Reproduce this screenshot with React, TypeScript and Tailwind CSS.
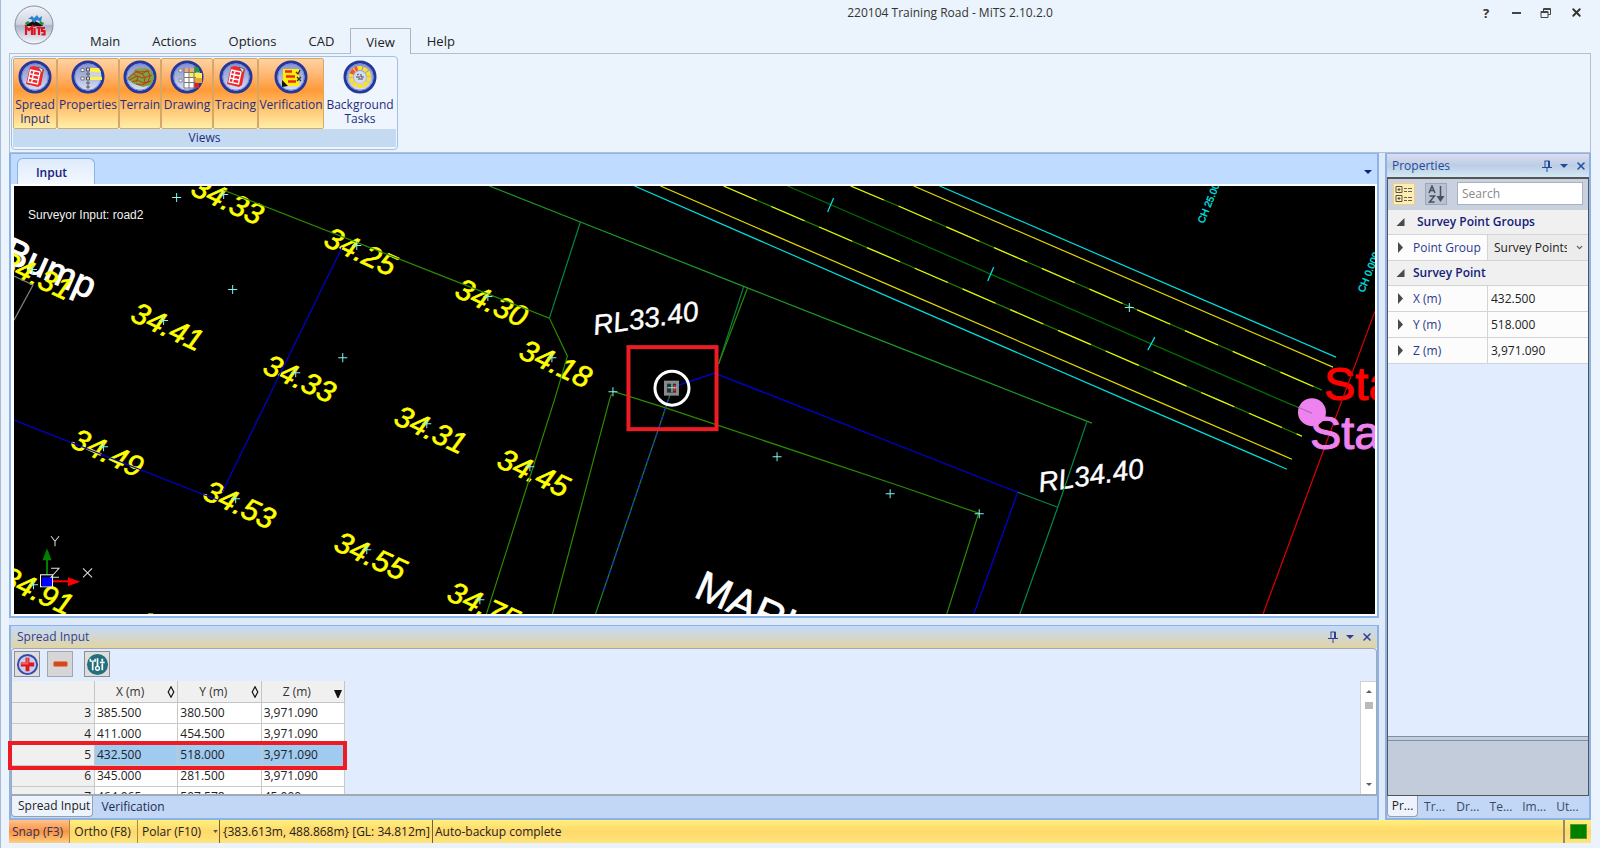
import React from 'react';
import { ChevronDown, X } from 'lucide-react';

type Point = [number, number];

const labels: { x: number; y: number; text: string }[] = [
  { x: 223, y: 194, text: '34.33' },
  { x: 356, y: 245, text: '34.25' },
  { x: 163, y: 320, text: '34.41' },
  { x: 295, y: 372, text: '34.33' },
  { x: 32, y: 269, text: '34.31' },
  { x: 487, y: 296, text: '34.30' },
  { x: 551, y: 357, text: '34.18' },
  { x: 426, y: 423, text: '34.31' },
  { x: 103, y: 446, text: '34.49' },
  { x: 235, y: 498, text: '34.53' },
  { x: 366, y: 549, text: '34.55' },
  { x: 529, y: 466, text: '34.45' },
  { x: 479, y: 599, text: '34.75' },
  { x: 33, y: 584, text: '34.91' },
];

const loneMarks: Point[] = [
  [176, 197], [232, 289], [342, 357], [612, 391], [776, 456], [889, 493], [978, 513], [1128, 307],
];

const lines: { points: string; color: string; dash?: string }[] = [
  { points: '223,190 450,279 549,318 567,356 554,400 486,614', color: '#2a8c00' },
  { points: '489,186 580,222 745,287 900,348 1091,423', color: '#1c9a28' },
  { points: '580,222 549,318', color: '#008a45' },
  { points: '743,287 718,364', color: '#008a45' },
  { points: '747,288 718,364', color: '#2a8c00' },
  { points: '342,247 267,400 222,492', color: '#0000d8' },
  { points: '14,420 218,500', color: '#0000d8' },
  { points: '14,276 33,285 14,320', color: '#808080' },
  { points: '672,387 714,373 783,400 900,446 1017,492 973,614', color: '#0000e0' },
  { points: '1086,422 1057,507 1019,614', color: '#008a45' },
  { points: '1017,492 1057,507', color: '#008a45' },
  { points: '612,391 666,408 900,486 978,513 946,614', color: '#2a8c00' },
  { points: '611,394 609,400 552,614', color: '#2a8c00' },
  { points: '671,390 665,408 595,614', color: '#1c8a20' },
  { points: '671,390 665,408 602,594', color: '#1030e0', dash: '5 4' },
  { points: '634,186 900,302 1126,400 1286,469', color: '#00dcdc' },
  { points: '660,186 900,290 1154,400 1291,459', color: '#e0d800' },
  { points: '723,186 900,262 1218,400 1301,436', color: '#1c8000' },
  { points: '723,186 900,262 1218,400 1301,436', color: '#f0f000', dash: '36 16' },
  { points: '787,186 900,235 1280,400 1311,413', color: '#007000' },
  { points: '850,186 900,207 1321,390', color: '#1c8000' },
  { points: '850,186 900,207 1321,390', color: '#f0f000', dash: '36 16' },
  { points: '913,186 1332,367', color: '#e0d800' },
  { points: '939,186 1335,357', color: '#00dcdc' },
  { points: '833,198 827,212', color: '#00e8e8' },
  { points: '993,267 987,281', color: '#00e8e8' },
  { points: '1154,337 1147,350', color: '#00e8e8' },
  { points: '1374,311 1262,614', color: '#e00000' },
];

function Mark({ x, y }: { x: number; y: number }) {
  return <path d={`M${x - 4} ${y + 0.5}h9M${x + 0.5} ${y - 4}v9`} stroke="#7ff5f5" strokeWidth="1" />;
}

function Drawing() {
  return (
    <svg
      className="block h-full w-full bg-black font-['Liberation_Sans',sans-serif]"
      viewBox="14 186 1360 428"
      preserveAspectRatio="xMinYMin slice"
      fill="none"
      role="img"
      aria-label="Survey plan"
    >
      <text fill="#fff" stroke="#fff" fontSize="37" transform="translate(1 260) rotate(24)">Bump</text>
      <text fill="#fff" stroke="#fff" strokeWidth=".6" fontSize="42" transform="translate(692 596) rotate(24)">MARK</text>
      <g fill="#fff" stroke="#fff" strokeWidth=".4" fontSize="28" fontStyle="italic">
        <text transform="translate(594 335) rotate(-8)">RL33.40</text>
        <text transform="translate(1039 492) rotate(-8)">RL34.40</text>
      </g>
      <g fill="#ffff00" stroke="#ffff00" strokeWidth=".6" fontSize="30" fontStyle="italic">
        {labels.map((l) => (
          <text key={`${l.x}-${l.y}`} transform={`translate(${l.x - 34} ${l.y}) rotate(25)`}>{l.text}</text>
        ))}
      </g>
      <text fill="#ff0000" stroke="#ff0000" fontSize="47" x="1323" y="400">Start</text>
      {lines.map((l, i) => (
        <polyline key={i} points={l.points} stroke={l.color} strokeWidth="1.2" strokeDasharray={l.dash} />
      ))}
      <circle cx="1311" cy="412" r="14" fill="#ee82ee" />
      <path d="M1297 407l14 6" stroke="#a06aa0" />
      <text fill="#ee82ee" stroke="#ee82ee" fontSize="47" x="1309" y="449">Start</text>
      <g fill="#00e8e8" stroke="#00e8e8" strokeWidth=".3" fontSize="10">
        <text transform="translate(1203 224) rotate(-68)">CH 25.000</text>
        <text transform="translate(1363 293) rotate(-68)">CH 0.000</text>
      </g>
      {labels.map((l) => <Mark key={`${l.x}-${l.y}`} x={l.x} y={l.y} />)}
      {loneMarks.map(([x, y]) => <Mark key={`${x}-${y}`} x={x} y={y} />)}
      <circle cx="671.5" cy="388" r="17" stroke="#fff" strokeWidth="3" />
      <rect x="665" y="382" width="12" height="12" fill="#303030" stroke="#8a8a8a" strokeWidth="3" />
      <path d="M674 385v6" stroke="#ff2020" strokeWidth="2" />
      <Mark x={671} y={387} />
      <rect x="628" y="347" width="88" height="82" stroke="#ed1c24" strokeWidth="4" />
      <path d="M148 613.5h5" stroke="#e0d800" />
      <path d="M47 574v-16" stroke="#008000" strokeWidth="2" />
      <path d="M47 548l4.500 12h-9z" fill="#008000" />
      <path d="M53 581h16" stroke="#f00" strokeWidth="2" />
      <path d="M80 581.500l-12 4.500v-9z" fill="#f00" />
      <rect x="40.500" y="574.500" width="12" height="12" stroke="#fff" />
      <rect x="42" y="577" width="10" height="9" fill="#00f" />
      <path d="M51 536l4 5 4-5M55 541v5M51 568h8l-8 9h8M83 568l9 9M92 568l-9 9" stroke="#e0e0e0" />
      <text fill="#f0f0f0" fontSize="12" x="28" y="219">Surveyor Input: road2</text>
    </svg>
  );
}

function Orb({ children }: { children: React.ReactNode }) {
  return (
    <svg className="h-[34px] w-[34px]" viewBox="0 0 34 34" fill="none" aria-hidden="true">
      <defs>
        <linearGradient id="orb" x1="0" y1="0" x2="0" y2="1">
          <stop offset="0" stopColor="#8391cf" />
          <stop offset=".5" stopColor="#a9b4de" />
          <stop offset="1" stopColor="#dfe6f8" />
        </linearGradient>
      </defs>
      <circle cx="17" cy="17" r="15" fill="url(#orb)" stroke="#24389c" strokeWidth="3" />
      <circle cx="17" cy="17" r="13.200" stroke="#7a8bd2" strokeWidth="1" />
      {children}
    </svg>
  );
}

const sheetIcon = (
  <Orb>
    <path d="M12 7l4-1 10 3-3 16-3 2-12-3z" fill="#f3262b" />
    <path d="M12.500 10l9.500 2-2.500 12-9.500-2zM12 14l9.500 2M11 18l9.500 2M16 11l-2.500 12" stroke="#fff" strokeWidth="1.300" />
    <path d="M20 7l5 2-1 4z" fill="#e8e8f0" stroke="#444" strokeWidth=".6" />
  </Orb>
);

const propertiesIcon = (
  <Orb>
    <path d="M19 8h9l2 4H19zM19 17h12v3H19z" fill="#fff04a" />
    <path d="M19 12h11v5H19z" fill="#c9d4dc" />
    <path d="M10 8.500h3v3h-3zM10 17h3v3h-3z" fill="#fff" stroke="#777" />
    <path d="M15.500 8h3v3h-3zM16 13h2v2h-2zM15.500 17h3v3h-3zM16 22h2v2h-2zM16 26h2v2h-2z" stroke="#555" fill="#ddd" />
  </Orb>
);

const terrainIcon = (
  <Orb>
    <path d="M4 19L13 9l10-1 6 3 2 7-3 7-8 2-9-3z" fill="#7da33c" />
    <path d="M5 18l8-6 6 2 6-4M6 20l8-4 6 2 9-3M9 22l6-2 5 3 8-2M12 11l5 1 9-1M13 24l6 1 7-3M11 14l4 3-2 5M19 13l3 5-1 5M25 11l2 5-2 6" stroke="#c2381e" />
  </Orb>
);

const drawingIcon = (
  <Orb>
    <path d="M14 8h12v20H14z" fill="#fff" />
    <path d="M14 8h9v4h-9z" fill="#f0a878" />
    <path d="M24 7h4l2 5h-6z" fill="#269a3a" />
    <path d="M20 13h12v5H20z" fill="#fff04a" />
    <path d="M24 18h8v5h-8z" fill="#e9a13a" />
    <path d="M24 23h5v5h-5z" fill="#e02020" />
    <path d="M14 8v20M19 8v20M24 7v21M14 12.500h12M14 17.500h12M14 22.500h12M14 28h12" stroke="#777" />
    <path d="M9 9h3v3H9zM9 19h3v3H9z" fill="#fff" stroke="#888" />
  </Orb>
);

const verificationIcon = (
  <Orb>
    <path d="M9 9h16v17H14l-5-5z" fill="#fff000" />
    <path d="M11 11.500h7M12 16.500h9M14 21.500h8" stroke="#ef2424" strokeWidth="2.500" />
    <path d="M22 12l2 2 2-4M23 17l4 4M27 17l-4 4" stroke="#333" strokeWidth="1.300" />
    <path d="M8 20v7l6-1z" fill="#111" />
  </Orb>
);

const tasksIcon = (
  <Orb>
    <circle cx="17" cy="17" r="9" stroke="#ffe21c" strokeWidth="4" strokeDasharray="4.500 1.150" />
    <path d="M8.500 14a9 9 0 0 1 6-5.500" stroke="#f0503c" strokeWidth="4" strokeDasharray="4.500 1.150" />
    <circle cx="17" cy="17" r="6" fill="#d5dcf3" />
    <path d="M13 17h4M18 14v3h3M15 19h5M14 15l2-1" stroke="#444" />
  </Orb>
);

const ribbonOn =
  'flex w-full flex-col items-center rounded-xs border border-[#d6a868] bg-linear-to-b from-[#ffd2a2] from-0% via-[#ff9a35] via-45% to-[#ffefa6] to-100% pt-px';

const ribbonButtons = [
  { label: ['Spread', 'Input'], icon: sheetIcon, width: 'w-[44px]' },
  { label: ['Properties'], icon: propertiesIcon, width: 'w-[62px]' },
  { label: ['Terrain'], icon: terrainIcon, width: 'w-[42px]' },
  { label: ['Drawing'], icon: drawingIcon, width: 'w-[52px]' },
  { label: ['Tracing'], icon: sheetIcon, width: 'w-[45px]' },
  { label: ['Verification'], icon: verificationIcon, width: 'w-[66px]' },
];

function RibbonLabel({ lines: rows }: { lines: string[] }) {
  return (
    <span className="block text-center text-[12px] leading-[14px] whitespace-nowrap text-[#1f2c80]">
      {rows.map((r) => <span key={r} className="block">{r}</span>)}
    </span>
  );
}

function AppLogo() {
  return (
    <svg className="h-10 w-10" viewBox="0 0 40 40" fill="none" aria-hidden="true">
      <defs>
        <linearGradient id="logo" x1="0" y1="0" x2="0" y2="1">
          <stop offset="0" stopColor="#f2f4f8" />
          <stop offset=".48" stopColor="#cdd3df" />
          <stop offset=".52" stopColor="#aab4c8" />
          <stop offset="1" stopColor="#f6f8fc" />
        </linearGradient>
      </defs>
      <circle cx="20" cy="20" r="19" fill="url(#logo)" stroke="#848d9e" />
      <path d="M12 21c2-4 5-3 8-6 3 3 6 2 9 6z" fill="#111" />
      <path d="M14 14l4-3 2 2 3-3 2 3 3-2-1 6-4-2-3 3-3-4z" fill="#2a83cf" />
      <path d="M11 18l3-2 2 2-4 2zM26 16l4 2-1 2-4-1z" fill="#1f9440" />
      <path d="M12 30v-8l3 3 3-3v8M20.500 23v7M20.500 20.500v1.500M22.500 22.500h4.500M25 22v8M31 23h-3v3h2.500v3.500h-3" stroke="#e0141c" strokeWidth="2.200" />
    </svg>
  );
}

function Pin() {
  return (
    <svg className="h-3 w-3" viewBox="0 0 12 12" fill="none" aria-hidden="true">
      <path d="M3.500 1h5M4 1v6M7.500 1v6M8.500 1v6M1 7.500h10M6 8v4" stroke="currentColor" />
    </svg>
  );
}

function Caret() {
  return (
    <svg className="h-1 w-2" viewBox="0 0 8 4" aria-hidden="true"><path d="M0 0h8L4 4z" fill="currentColor" /></svg>
  );
}

function PanelControls({ name }: { name: string }) {
  return (
    <div className="flex items-center gap-[7px]">
      <button type="button" aria-label={`Pin ${name}`}><Pin /></button>
      <button type="button" aria-label={`${name} options`}><Caret /></button>
      <button type="button" aria-label={`Close ${name}`}><X size={12} strokeWidth={3} /></button>
    </div>
  );
}

const rows = [
  ['3', '385.500', '380.500', '3,971.090'],
  ['4', '411.000', '454.500', '3,971.090'],
  ['5', '432.500', '518.000', '3,971.090'],
  ['6', '345.000', '281.500', '3,971.090'],
  ['7', '464.065', '507.578', '45.000'],
];

function SpreadInput() {
  return (
    <section className="relative mt-[7px] flex h-[195px] shrink-0 flex-col border-2 border-t border-[#8db2e8] bg-[#e1edfe]">
      <header className="flex h-[22px] shrink-0 items-center justify-between bg-linear-to-b from-[#c3daf9] to-[#e2d3a2] pr-1 pl-[6px] text-[#2f3f94]">
        <h2>Spread Input</h2>
        <PanelControls name="Spread Input" />
      </header>
      <div className="flex min-h-0 flex-1 flex-col rounded-t-sm border border-b-2 border-[#a3a9b3]">
        <div className="flex h-8 shrink-0 items-start pt-[2px] pl-[2px]">
          <button type="button" aria-label="Add point" className="mr-[7px] flex h-[26px] w-[26px] items-center justify-center border border-[#8e8e8e] bg-[#dedede]">
            <svg className="h-[23px] w-[23px]" viewBox="0 0 24 24" fill="none" aria-hidden="true">
              <circle cx="12" cy="12" r="10" fill="#c5cdf0" stroke="#3648a8" strokeWidth="2" />
              <path d="M12 5v14M5 12h14" stroke="#e01616" strokeWidth="4" />
              <path d="M12 5v7M5 11h7" stroke="#f0605a" strokeWidth="2" />
            </svg>
          </button>
          <button type="button" aria-label="Remove point" className="mr-[11px] flex h-[26px] w-[26px] items-center justify-center border border-[#a6a6a6] bg-[#d6d6d8]">
            <span className="h-[6px] w-[15px] rounded-xs border border-[#e48a60] bg-[#d2481c]" />
          </button>
          <button type="button" aria-label="Filter points" className="flex h-[26px] w-[26px] items-center justify-center border border-[#8e8e8e] bg-[#dedede]">
            <svg className="h-[23px] w-[23px]" viewBox="0 0 24 24" fill="none" aria-hidden="true">
              <circle cx="12" cy="12" r="11" fill="#22707f" />
              <path d="M7 9v9M12 5.500v8M17 11v7M17 6v3" stroke="#fff" strokeWidth="1.800" />
              <path d="M4.500 6v2.500h5V6M14.500 10h5" stroke="#fff" strokeWidth="1.500" />
              <circle cx="12" cy="16" r="2" stroke="#fff" strokeWidth="1.400" />
            </svg>
          </button>
        </div>
        <div className="flex min-h-0 flex-1 items-stretch justify-between">
          <div className="overflow-hidden">
            <table className="w-[333px] table-fixed border-separate border-spacing-0">
              <thead>
                <tr className="h-[22px] bg-[#f0f0f0] text-[#333]">
                  <th className="w-[83px] border-r border-b border-[#c4c4c4]" aria-label="Row" />
                  {['X (m)', 'Y (m)', 'Z (m)'].map((h, i) => (
                    <th key={h} className="border-r border-b border-[#c4c4c4] p-0 font-normal">
                      <span className="flex items-center justify-between pr-[2px] pl-[21px]">
                        {h}
                        {i < 2 ? (
                          <svg className="h-3 w-2" viewBox="0 0 8 12" fill="none" aria-hidden="true"><path d="M4 .8L6.800 6 4 11.200 1.200 6z" stroke="#111" strokeWidth="1.200" /></svg>
                        ) : (
                          <svg className="mt-1 h-2 w-2" viewBox="0 0 8 8" aria-hidden="true"><path d="M0 0h8L4.500 8h-1z" fill="#111" /></svg>
                        )}
                      </span>
                    </th>
                  ))}
                </tr>
              </thead>
              <tbody>
                {rows.map(([n, ...cells]) => (
                  <tr key={n} className={`h-[21px] leading-4 ${n === '5' ? 'bg-[#a0cbf0]' : 'bg-white'}`}>
                    <th scope="row" className="border-r border-b border-[#c9c9c9] bg-[#f0f0f0] py-0 pr-[3px] pl-0 text-right font-normal">{n}</th>
                    {cells.map((c, i) => (
                      <td key={i} className="border-r border-b border-[#c9c9c9] py-0 pr-0 pl-[2px]">{c}</td>
                    ))}
                  </tr>
                ))}
              </tbody>
            </table>
          </div>
          <div className="flex w-4 flex-col items-center justify-between border-t border-l border-[#d0d0d0] bg-white py-2 text-[#606060]">
            <div className="flex flex-col items-center gap-[9px]">
              <button type="button" aria-label="Scroll up" className="flex"><svg className="h-[3px] w-[6px]" viewBox="0 0 6 3" aria-hidden="true"><path d="M0 3h6L3 0z" fill="currentColor" /></svg></button>
              <span className="h-[7px] w-2 bg-[#b9b9b9]" />
            </div>
            <button type="button" aria-label="Scroll down" className="flex"><svg className="h-[3px] w-[6px]" viewBox="0 0 6 3" aria-hidden="true"><path d="M0 0h6L3 3z" fill="currentColor" /></svg></button>
          </div>
        </div>
      </div>
      <nav className="flex h-[22px] shrink-0 items-start bg-[#c1d7f5]">
        <button type="button" className="h-[21px] rounded-b-sm border border-t-0 border-[#9a9fa8] bg-[#edf3fc] pr-[2px] pl-[6px] text-[#222]">Spread Input</button>
        <button type="button" className="h-[21px] px-2 text-[#222c50]">Verification</button>
      </nav>
      <div className="pointer-events-none absolute top-[115px] -left-[3px] h-[29px] w-[339px] border-4 border-[#ed1c24]" />
    </section>
  );
}

function Expander({ open = false }: { open?: boolean }) {
  return (
    <svg className="h-[11px] w-[9px] shrink-0" viewBox="0 0 9 11" aria-hidden="true">
      <path d={open ? 'M8.500 1v8H.5z' : 'M2 0v11l5-5.500z'} fill="#4a4a4a" />
    </svg>
  );
}

function PropertiesPanel() {
  return (
    <aside className="flex w-[206px] shrink-0 flex-col border-2 border-t border-[#8db2e8] bg-[#c1d7f5]">
      <header className="flex h-[23px] shrink-0 items-center justify-between bg-linear-to-b from-[#dcdcf0] via-[#bccde4] to-[#d3e9f4] pr-[2px] pl-[5px] text-[#1f4b9b]">
        <h2>Properties</h2>
        <PanelControls name="Properties" />
      </header>
      <div className="flex min-h-0 flex-1 flex-col border border-t-2 border-[#555] bg-[#e1edfe]">
        <div className="flex h-[31px] shrink-0 items-center bg-[#c9d0de] px-[5px] pb-[2px]">
          <button type="button" aria-label="Categorized" className="mr-[10px] flex h-[22px] w-[22px] shrink-0 items-center justify-center border border-[#ecd08a] bg-[#fdecb4]">
            <svg className="h-4 w-[18px]" viewBox="0 0 18 16" fill="none" aria-hidden="true">
              <path d="M1 .5h6v6H1zM1 9.500h6v6H1zM2.500 3.500h3M4 2v3M2.500 12.500h3M4 11v3" stroke="#5a513c" />
              <path d="M9 2.500h3M13 2.500h4M9 5.500h3M13 5.500h4M9 11.500h3M13 11.500h4M9 14.500h3M13 14.500h4" stroke="#6a6250" />
            </svg>
          </button>
          <button type="button" aria-label="Alphabetical" className="mr-[10px] flex h-[22px] w-[22px] shrink-0 items-center justify-center border border-[#9aa5b8] bg-[#b7c2d4]">
            <svg className="h-[18px] w-[18px]" viewBox="0 0 18 18" fill="none" aria-hidden="true">
              <path d="M2 8l3-7 3 7M3 5.500h4M2.500 11h5l-5 6h5M13.500 1v12" stroke="#4a4f58" strokeWidth="1.500" />
              <path d="M9.500 11h8l-4 6z" fill="#4a4f58" />
            </svg>
          </button>
          <input aria-label="Search properties" placeholder="Search" className="h-[23px] min-w-0 flex-1 border border-[#a8b2c4] bg-white px-1 placeholder:text-[#8a8a8a]" />
        </div>
        <table className="w-full table-fixed border-separate border-spacing-0">
          <tbody>
            <tr className="h-[25px] bg-[#f0f0f0]">
              <th colSpan={2} scope="colgroup" className="border-b border-[#d4d4d4] p-0 text-left font-semibold text-[#14207a]">
                <span className="flex items-center gap-[12px] pl-2"><Expander open />Survey Point Groups</span>
              </th>
            </tr>
            <tr className="h-[26px] bg-[#fcfcfd]">
              <th scope="row" className="border-r border-b border-[#d4d4d4] p-0 text-left font-normal text-[#2b3a8c]">
                <label htmlFor="point-group" className="flex items-center gap-2 pl-2 whitespace-nowrap"><Expander />Point Group</label>
              </th>
              <td className="border-b border-[#d4d4d4] bg-[#ececec] p-0">
                <span className="flex items-center pr-[5px] pl-[6px]">
                  <select id="point-group" className="w-[73px] flex-1 appearance-none overflow-hidden bg-transparent text-clip text-[#222]">
                    <option>Survey Points</option>
                  </select>
                  <ChevronDown size={9} strokeWidth={3} className="ml-2 shrink-0 text-[#555]" />
                </span>
              </td>
            </tr>
            <tr className="h-[25px] bg-[#f0f0f0]">
              <th colSpan={2} scope="colgroup" className="border-b border-[#d4d4d4] p-0 text-left font-semibold text-[#14207a]">
                <span className="flex items-center gap-2 pl-2"><Expander open />Survey Point</span>
              </th>
            </tr>
            {[['X (m)', '432.500'], ['Y (m)', '518.000'], ['Z (m)', '3,971.090']].map(([k, v]) => (
              <tr key={k} className="h-[26px] bg-[#fcfcfd]">
                <th scope="row" className="border-r border-b border-[#d4d4d4] p-0 text-left font-normal text-[#2b3a8c]">
                  <label htmlFor={k} className="flex items-center gap-2 pl-2"><Expander />{k}</label>
                </th>
                <td className="border-b border-[#d4d4d4] p-0">
                  <input id={k} defaultValue={v} className="block w-full bg-transparent pl-[3px] text-[#222]" />
                </td>
              </tr>
            ))}
          </tbody>
        </table>
        <div className="flex-1" />
        <div className="h-[5px] shrink-0 border-y border-[#7f8fa8] bg-[#c3ccda]" />
        <div className="h-[54px] shrink-0 bg-[#c3ccda]" />
      </div>
      <nav className="flex h-[22px] shrink-0 items-start pr-[5px] text-[#3a4a66]">
        <button type="button" className="h-[21px] w-[31px] rounded-b-sm border border-t-0 border-[#9a9fa8] bg-[#edf3fc] text-[#222]">Pr...</button>
        {['Tr...', 'Dr...', 'Te...', 'Im...', 'Ut...'].map((t) => (
          <button key={t} type="button" className="h-[21px] min-w-0 flex-1 text-center">{t}</button>
        ))}
      </nav>
    </aside>
  );
}

export default function App() {
  const menu = 'h-[26px] border border-transparent px-[15px] text-[#222]';
  return (
    <div className="flex h-screen flex-col border-l border-[#a9bcd6] bg-[#ebf3fc] font-['Open_Sans','Noto_Sans',sans-serif] text-[12px] leading-4 text-[#222]">
      <header className="flex h-[53px] shrink-0">
        <div className="w-[73px] shrink-0 pt-[5px] pl-[13px]">
          <button type="button" aria-label="Application menu"><AppLogo /></button>
        </div>
        <div className="flex min-w-0 flex-1 flex-col justify-between">
          <div className="flex h-[25px] items-center pr-[17px]">
            <h1 className="flex-1 pl-[346px] text-center text-[#333]">220104 Training Road - MiTS 2.10.2.0</h1>
            <div className="flex items-center gap-[18px] text-[#333]">
              <button type="button" aria-label="Help" className="w-3 text-[13px] font-bold">?</button>
              <button type="button" aria-label="Minimize" className="flex h-3 w-3 items-center justify-center"><span className="h-[2px] w-[9px] bg-[#444]" /></button>
              <button type="button" aria-label="Restore">
                <svg className="h-3 w-3" viewBox="0 0 12 12" fill="none" aria-hidden="true"><path d="M1 4.500h7v6H1zM1 5.500h7M3.500 4V1.500h7v6H8M3.500 2.500h7" stroke="#444" /></svg>
              </button>
              <button type="button" aria-label="Close"><X size={13} strokeWidth={3.5} /></button>
            </div>
          </div>
          <nav className="relative z-10 -mb-px flex text-[13px]">
            {['Main', 'Actions', 'Options', 'CAD'].map((m) => <button key={m} type="button" className={menu}>{m}</button>)}
            <button type="button" className="h-[26px] border border-b-0 border-[#a9b6c8] bg-[#ebf3fc] px-[15px] text-[#222]">View</button>
            <button type="button" className={menu}>Help</button>
          </nav>
        </div>
      </header>

      <div className="mr-[9px] ml-2 h-[100px] shrink-0 border border-[#b3bfce] px-px py-[2px]">
        <section className="flex h-[94px] w-fit flex-col rounded-sm border border-[#9fc0ea] bg-[#eff5fd] p-px">
          <div className="flex h-[71px]">
            {ribbonButtons.map((b) => (
              <div key={b.label[0]} className={`flex shrink-0 ${b.width}`}>
                <button type="button" aria-pressed="true" className={ribbonOn}>{b.icon}<span className="pt-1"><RibbonLabel lines={b.label} /></span></button>
              </div>
            ))}
            <button type="button" className="flex w-[72px] shrink-0 flex-col items-center pt-[2px]">
              {tasksIcon}<span className="pt-1"><RibbonLabel lines={['Background', 'Tasks']} /></span>
            </button>
          </div>
          <h2 className="h-[18px] bg-[#c3daf1] text-center leading-[18px] text-[#1f2c80]">Views</h2>
        </section>
      </div>

      <main className="mr-[9px] ml-2 flex min-h-0 flex-1 gap-[6px] bg-[#dfeaf8]">
        <div className="flex min-w-0 flex-1 flex-col">
          <section className="flex min-h-0 flex-1 flex-col border-2 border-t border-[#8db2e8] bg-[#bfdbff]">
            <div className="flex h-[30px] shrink-0 items-end justify-between pr-[5px] pl-[6px]">
              <button type="button" className="h-[26px] w-[78px] rounded-t-md border border-b-0 border-[#8db2e8] bg-linear-to-b from-[#dfebfb] to-[#f3f8ff] pt-[3px] pr-[9px] font-semibold text-[#14207a]">Input</button>
              <button type="button" aria-label="Open views" className="mb-[10px] flex text-[#14207a]"><Caret /></button>
            </div>
            <div className="min-h-0 flex-1 border-2 border-l-3 border-white"><Drawing /></div>
          </section>
          <SpreadInput />
        </div>
        <PropertiesPanel />
      </main>

      <footer className="mr-[9px] mb-[5px] ml-2 flex h-[23px] shrink-0 items-stretch bg-linear-to-b from-[#fff07c] via-[#ffd86a] to-[#ffe57e]">
        <button type="button" className="w-[60px] bg-linear-to-b from-[#fdc08a] via-[#fb9340] to-[#fdcf80] pr-[3px] text-[#2f3060]">Snap (F3)</button>
        <button type="button" className="w-[68px] border-l border-[#a08c50] pr-[2px]">Ortho (F8)</button>
        <button type="button" className="flex w-[82px] items-center justify-between border-l border-[#a08c50] pr-px pl-1">
          Polar (F10)<svg className="h-[3px] w-[5px]" viewBox="0 0 6 4" aria-hidden="true"><path d="M0 0h6L3 4z" fill="#5a5340" /></svg>
        </button>
        <span className="flex w-[213px] items-center border-l border-[#6d6240] pl-[3px] whitespace-nowrap">{'{383.613m, 488.868m} [GL: 34.812m]'}</span>
        <span className="flex flex-1 items-center border-l border-[#6d6240] pl-[2px]">Auto-backup complete</span>
        <span className="flex items-center border-l-2 border-[#948a70] pr-1 pl-[5px]"><span className="h-[15px] w-[17px] border border-[#5a9a20] bg-[#008000]" /></span>
      </footer>
    </div>
  );
}
